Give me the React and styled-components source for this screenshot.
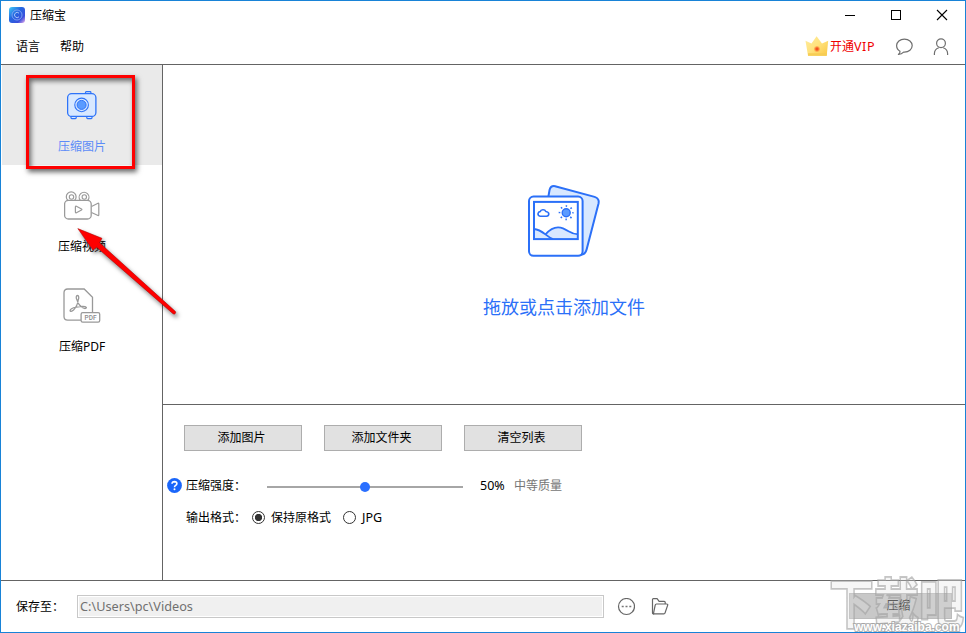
import { useState } from 'react';
import styled, { createGlobalStyle, css } from 'styled-components';

const GlobalStyle = createGlobalStyle`
	* {
		box-sizing: border-box;
	}

	body {
		margin: 0;
		background-color: white;
		font-family: 'Noto Sans', 'Noto Sans CJK SC', sans-serif;
		font-size: 12px;
		line-height: 16px;
		color: black;
	}

	button {
		font: inherit;
		color: inherit;
		padding: 0;
	}
`;

const LogoIcon = () => (
	<svg width='16' height='16' viewBox='0 0 16 16'>
		<defs>
			<linearGradient id='logo' x1='0' y1='0' x2='1' y2='1'>
				<stop offset='0' stopColor='#42d0f8' />
				<stop offset='0.4' stopColor='#2468e0' />
				<stop offset='0.75' stopColor='#3a50dc' />
				<stop offset='1' stopColor='#f0b0ec' />
			</linearGradient>
		</defs>
		<rect width='16' height='16' rx='3' fill='url(#logo)' />
		<circle cx='8' cy='8' r='5' fill='none' stroke='#7fa6f4' strokeWidth='0.9' />
		<path
			d='M10 6.2A2.6 2.6 0 1 0 10 9.8'
			fill='none'
			stroke='#a9c6fa'
			strokeWidth='1'
		/>
	</svg>
);

const CrownIcon = () => (
	<svg width='24' height='20' viewBox='0 0 24 20'>
		<defs>
			<linearGradient id='crown' x1='0' y1='0' x2='1' y2='1'>
				<stop offset='0' stopColor='#ffec9e' />
				<stop offset='0.5' stopColor='#ffe27c' />
				<stop offset='1' stopColor='#fbc743' />
			</linearGradient>
			<radialGradient id='gem'>
				<stop offset='0.35' stopColor='#f4511e' />
				<stop offset='1' stopColor='#ffb052' stopOpacity='0.5' />
			</radialGradient>
		</defs>
		<path
			d='M.5 4.8 6.5 7.4 11.6.2 17 7.4 23.2 4.8 21.7 19.8H3Z'
			fill='url(#crown)'
		/>
		<path d='M3 17.2h19l-.3 2.6H3Z' fill='#f6cd55' />
		<circle cx='12' cy='13' r='3.1' fill='url(#gem)' />
	</svg>
);

const ChatIcon = () => (
	<svg width='18' height='18' viewBox='0 0 18 18' fill='none' stroke='#6e6e6e'>
		<path
			d='M5 13.2C2.9 12.1 1.6 10 1.6 7.6 1.6 3.9 5 1.1 9.4 1.1s7.8 2.8 7.8 6.5-3.4 6.6-7.8 6.6H8.6C7.5 15.4 5.9 16.3 3.4 16.5c1.3-1 1.8-2 1.6-3.3Z'
			strokeWidth='1.2'
			strokeLinejoin='round'
		/>
	</svg>
);

const UserIcon = () => (
	<svg width='16' height='18' viewBox='0 0 16 18' fill='none' stroke='#6e6e6e'>
		<circle cx='8' cy='5.3' r='4.4' strokeWidth='1.2' />
		<path
			d='M1.4 17v-1.4c0-3 1.8-5 4.4-5.9M14.6 17v-1.4c0-3-1.8-5-4.4-5.9'
			strokeWidth='1.2'
		/>
	</svg>
);

const ImageIcon = () => (
	<svg width='30' height='30' viewBox='0 0 30 30' fill='#d8e8ff' stroke='#2e73f8'>
		<path
			d='M18.5 3V1.5q0-.8.8-.8h3.8q.8 0 .8.8V3M4 25v1.8q0 .8.8.8h3.6q.8 0 .8-.8V25M19.8 25v1.8q0 .8.8.8h3.6q.8 0 .8-.8V25'
			strokeWidth='1.2'
		/>
		<rect x='.6' y='2.7' width='28.3' height='22.7' rx='4' strokeWidth='1.3' />
		<circle cx='14.6' cy='13.9' r='6.8' strokeWidth='1.1' />
		<circle cx='14.6' cy='13.9' r='4.5' fill='#5b9bff' />
	</svg>
);

const VideoIcon = () => (
	<svg width='36' height='30' viewBox='0 0 36 30' fill='none' stroke='#9a9a9a'>
		<path
			d='M3.9 9.4A4.9 4.9 0 1 1 10.5 9.4M16.3 9.4A4.9 4.9 0 1 1 23.8 9.4'
			strokeWidth='1.2'
		/>
		<circle cx='7.5' cy='6' r='2.2' strokeWidth='1.1' />
		<circle cx='20.3' cy='6' r='2.2' strokeWidth='1.1' />
		<rect x='.6' y='9.3' width='26.6' height='18.7' rx='3.8' strokeWidth='1.3' />
		<path
			d='M27.5 15.5 34 12.2q.8-.3.8.5V24q0 .8-.8.5L27.5 21.5'
			strokeWidth='1.2'
		/>
		<path
			d='M11.4 15.9q0-1.1 1-.6l5.1 2.7q.8.5 0 1l-5.1 2.7q-1 .5-1-.6Z'
			strokeWidth='1.2'
		/>
	</svg>
);

const PdfIcon = () => (
	<svg width='38' height='36' viewBox='0 0 38 36' fill='none' stroke='#999'>
		<path
			d='M18 32.1H4.7Q1 32.1 1 28.4V4.7Q1 1 4.7 1H21.2L29.5 9.2V24'
			strokeWidth='1.3'
		/>
		<path
			d='M13.9 11.7C12.7 9.6 13.2 7.5 14.5 7.5s1.7 2.1.7 4.5c-.4 3.5-2 7.2-4.7 10.1-1.6 1.4-3.5 1.7-3.4.5.1-1.4 2.6-2.7 6.2-3.4 3.6-.8 8.9-1.3 10 .1.4 1-1.3 1.8-3.5.5-2.8-1.6-5-4.6-5.9-8.1Z'
			strokeWidth='1.3'
		/>
		<rect
			x='18.1'
			y='24.7'
			width='18.6'
			height='9.4'
			rx='1.6'
			fill='white'
			strokeWidth='1.3'
		/>
		<text
			x='27.5'
			y='32'
			textAnchor='middle'
			fontFamily='Roboto, sans-serif'
			fontSize='6.5'
			fontWeight='500'
			fill='#8a8a8a'
			stroke='none'
		>
			PDF
		</text>
	</svg>
);

const PhotosIcon = () => (
	<svg
		width='74'
		height='74'
		viewBox='0 0 74 74'
		fill='#d8e8ff'
		stroke='#2b70f8'
		strokeWidth='2'
		strokeLinejoin='round'
	>
		<path d='M21.2 13.6 22.6 5.8Q23.8 1.4 28.1 2.2L67.6 12.9Q72.6 14.6 71.6 19.3L59.6 65.5Q58.4 70.6 53.5 70.9' />
		<rect x='2' y='12.6' width='53.6' height='59.2' rx='4.5' fill='white' />
		<path
			d='M7 45.2C13 45.5 16.2 47.8 19 50.8 24.2 44.5 30.5 42.6 36 44.8 42.5 47.5 44.8 51 51 50.4V55H7Z'
			stroke='none'
		/>
		<path
			d='M7 45C15 45.3 19.5 52.8 26 55.2M18.5 50.4C24 44.1 30.5 42.2 36 44.4 42.5 47.1 44.8 50.6 51 50'
			fill='none'
			strokeWidth='1.8'
		/>
		<rect x='7' y='17.9' width='43.8' height='37.2' fill='none' strokeLinejoin='miter' />
		<path
			d='M13.2 32.3Q10.8 31.7 11 29.6 11.3 27.7 13.3 27.5 13.7 25.9 15.8 25.7 18 25.5 18.8 27.5 21.8 28 21.8 30 21.7 32.1 19.4 32.3Z'
			fill='white'
			strokeWidth='1.6'
		/>
		<circle cx='39.2' cy='28.7' r='4' fill='#5b9bff' strokeWidth='1.4' />
		<circle
			cx='39.2'
			cy='28.7'
			r='6.7'
			fill='none'
			strokeWidth='1.7'
			strokeDasharray='1.5 3.762'
			strokeDashoffset='.75'
		/>
	</svg>
);

const HelpIcon = () => (
	<svg width='15' height='15' viewBox='0 0 15 15'>
		<circle cx='7.5' cy='7.5' r='7.4' fill='#1a66fa' />
		<path
			d='M5 5.8Q5.1 3.6 7.5 3.6 9.8 3.7 9.9 5.6 9.9 6.7 8.7 7.4 7.5 8 7.5 9.2'
			fill='none'
			stroke='white'
			strokeWidth='1.6'
		/>
		<circle cx='7.5' cy='11.2' r='1' fill='white' />
	</svg>
);

const MoreIcon = () => (
	<svg width='18' height='18' viewBox='0 0 18 18'>
		<circle cx='9.5' cy='8.5' r='8' fill='none' stroke='#666' strokeWidth='1.2' />
		<path d='M4.7 7.7h2v1.6h-2zM8.5 7.7h2v1.6h-2zM12.3 7.7h2v1.6h-2z' fill='#777' />
	</svg>
);

const FolderIcon = () => (
	<svg
		width='18'
		height='18'
		viewBox='0 0 18 18'
		fill='none'
		stroke='#666'
		strokeWidth='1.2'
		strokeLinejoin='round'
	>
		<path d='M3.2 15.8H2.4Q1.5 15.8 1.5 14.8V1.5Q1.5.6 2.4.6H6.1L8.1 3.3H13.2Q14.2 3.3 14.2 4.3V5.9' />
		<path d='M2.4 15.8 4.2 7.1Q4.4 6 5.5 6H15.8Q17 6 16.7 7.1L14.1 14.8Q13.8 15.8 12.8 15.8Z' />
	</svg>
);

const tools = [
	{ id: 'image', label: '压缩图片', icon: <ImageIcon /> },
	{ id: 'video', label: '压缩视频', icon: <VideoIcon /> },
	{ id: 'pdf', label: '压缩PDF', icon: <PdfIcon /> },
];

export default () => {
	const [tool, setTool] = useState('image');
	const [format, setFormat] = useState('keep');
	const strength = 50;

	return (
		<Window>
			<GlobalStyle />
			<TitleBar>
				<LogoIcon />
				<Title>压缩宝</Title>
				<WindowControls>
					<svg width='12' height='12' stroke='black'>
						<path d='M1 6.5h10' />
					</svg>
					<svg width='12' height='12' fill='none' stroke='black'>
						<rect x='1.5' y='1.5' width='9' height='9' />
					</svg>
					<svg width='12' height='12' stroke='black'>
						<path d='M1 1 11 11M11 1 1 11' strokeWidth='1.1' />
					</svg>
				</WindowControls>
			</TitleBar>
			<MenuBar>
				<MenuItem>语言</MenuItem>
				<MenuItem>帮助</MenuItem>
				<Account>
					<CrownIcon />
					<VipLink>
						开通<span>VIP</span>
					</VipLink>
					<ChatIcon />
					<UserIcon />
				</Account>
			</MenuBar>
			<Body>
				<Sidebar>
					{tools.map(({ id, label, icon }) => (
						<SidebarItem
							key={id}
							$active={tool === id}
							onClick={() => setTool(id)}
						>
							<IconSlot>{icon}</IconSlot>
							{label}
						</SidebarItem>
					))}
					<Highlight />
					<Arrow width='130' height='110' viewBox='0 0 130 110'>
						<path
							d='M7.8 9.6 32 19.3 29.6 23.8 105 92.1A1.5 1.5 0 0 1 103 94.7L26.6 28.2 23 31.3Z'
							fill='#fe0000'
							stroke='#a40000'
							strokeWidth='.5'
						/>
					</Arrow>
				</Sidebar>
				<Main>
					<DropZone>
						<PhotosIcon />
						<p>拖放或点击添加文件</p>
					</DropZone>
					<Settings>
						<Buttons>
							<Button>添加图片</Button>
							<Button>添加文件夹</Button>
							<Button>清空列表</Button>
						</Buttons>
						<StrengthRow>
							<HelpIcon />
							<Label>压缩强度：</Label>
							<Track>
								<Thumb style={{ left: `${strength}%` }} />
							</Track>
							<Percent>{strength}%</Percent>
							<Quality>中等质量</Quality>
						</StrengthRow>
						<FormatRow>
							<Label>输出格式：</Label>
							<Option onClick={() => setFormat('keep')}>
								<Radio $checked={format === 'keep'} />
								<span>保持原格式</span>
							</Option>
							<Option onClick={() => setFormat('jpg')}>
								<Radio $checked={format === 'jpg'} />
								<Latin>JPG</Latin>
							</Option>
						</FormatRow>
					</Settings>
				</Main>
			</Body>
			<Footer>
				<SaveLabel>保存至：</SaveLabel>
				<PathBox>C:\Users\pc\Videos</PathBox>
				<MoreIcon />
				<FolderIcon />
				<CompressButton>压缩</CompressButton>
			</Footer>
			<Watermark>
				<strong>下载吧</strong>
				<span>www.xiazaiba.com</span>
			</Watermark>
		</Window>
	);
};

const Window = styled.div`
	position: relative;
	width: 966px;
	height: 633px;
	border: 1px solid #1883d7;
	background-color: white;
	display: flex;
	flex-direction: column;
	overflow: hidden;
	white-space: nowrap;

	svg {
		display: block;
		flex: none;
	}
`;

const TitleBar = styled.header`
	height: 28px;
	display: flex;
	align-items: center;
	padding: 0 17px 0 8px;
`;

const Title = styled.h1`
	margin: 2px 0 0 5px;
	font-size: 12px;
	font-weight: 400;
`;

const WindowControls = styled.div`
	margin-left: auto;
	display: flex;
	gap: 34px;
`;

const MenuBar = styled.nav`
	height: 36px;
	border-bottom: 1px solid #646464;
	display: flex;
	align-items: center;
	gap: 20px;
	padding: 0 16px 0 15px;
`;

const MenuItem = styled.span`
	margin-top: 1px;
`;

const Account = styled.div`
	margin-left: auto;
	display: flex;
	align-items: center;

	svg:first-child {
		margin-bottom: 2px;
	}

	svg + svg {
		margin-left: 20px;
	}
`;

const VipLink = styled.span`
	width: 46px;
	margin: 0 19px 0 1px;
	color: #f00000;

	span {
		font-size: 12.5px;
		letter-spacing: 0.6px;
	}
`;

const Body = styled.div`
	flex: 1;
	display: flex;
	min-height: 0;
`;

const Sidebar = styled.aside`
	position: relative;
	width: 162px;
	border-right: 1px solid #646464;
	padding-left: 1px;
`;

const SidebarItem = styled.div`
	height: 100px;
	padding-top: 21px;
	display: flex;
	flex-direction: column;
	align-items: center;
	gap: 13px;

	${({ $active }) =>
		$active &&
		css`
			background-color: #eaeaea;
			color: #5c8cf8;
		`}
`;

const IconSlot = styled.div`
	height: 40px;
	margin-right: 1px;
	display: flex;
	align-items: center;
`;

const Highlight = styled.div`
	position: absolute;
	left: 25px;
	top: 10px;
	width: 109px;
	height: 94px;
	border: 3px solid #fe0000;
	box-shadow: 2px 3px 5px rgba(0, 0, 0, 0.6),
		inset 2px 3px 5px rgba(0, 0, 0, 0.55);
`;

const Arrow = styled.svg`
	position: absolute;
	z-index: 2;
	left: 69px;
	top: 154px;
	filter: drop-shadow(2px 3px 2px rgba(0, 0, 0, 0.5));
`;

const Main = styled.main`
	flex: 1;
	display: flex;
	flex-direction: column;
`;

const DropZone = styled.section`
	height: 340px;
	border-bottom: 1px solid #646464;
	padding-top: 119px;
	display: flex;
	flex-direction: column;
	align-items: center;

	p {
		margin: 37px 0 0;
		font-size: 18px;
		line-height: 24px;
		color: #2b70f8;
	}
`;

const Settings = styled.section`
	padding: 20px 0 0 4px;
`;

const Buttons = styled.div`
	display: flex;
	gap: 22px;
	padding-left: 17px;
`;

const Button = styled.button`
	width: 118px;
	height: 26px;
	border: 1px solid #adadad;
	background-color: #e1e1e1;
	line-height: 20px;
	padding-right: 3px;
`;

const StrengthRow = styled.div`
	display: flex;
	align-items: center;
	height: 16px;
	margin-top: 26px;
`;

const FormatRow = styled.div`
	display: flex;
	align-items: center;
	height: 16px;
	margin: 16px 0 0 15px;
`;

const Label = styled.span`
	width: 60px;
	margin: 1px 0 0 4px;
`;

const Track = styled.div`
	position: relative;
	width: 196px;
	height: 2px;
	margin: 3px 17px 0 21px;
	background-color: #a6a6a6;
`;

const Thumb = styled.i`
	position: absolute;
	top: -4px;
	width: 10px;
	height: 10px;
	margin-left: -5px;
	border-radius: 50%;
	background-color: #2a6fff;
`;

const Latin = styled.span`
	font-size: 12.5px;
`;

const Percent = styled(Latin)`
	width: 34px;
	margin-top: 2px;
`;

const Quality = styled.span`
	margin-top: 1px;
	color: #767676;
`;

const Option = styled.div`
	display: flex;
	align-items: center;
	gap: 6px;
	margin: 0 6px;

	span {
		margin-top: 1px;
	}
`;

const Radio = styled.i`
	width: 13px;
	height: 13px;
	border: 1px solid #333;
	border-radius: 50%;
	background: ${({ $checked }) =>
		$checked ? 'radial-gradient(circle, #333 3.3px, white 4px)' : 'white'};
`;

const Footer = styled.footer`
	height: 52px;
	border-top: 1px solid #646464;
	display: flex;
	align-items: center;
	padding: 0 13px 0 15px;

	svg + svg {
		margin-left: 16px;
	}
`;

const SaveLabel = styled.span`
	width: 61px;
	margin-top: 1px;
`;

const PathBox = styled.div`
	width: 527px;
	height: 23px;
	margin-right: 13px;
	padding-left: 2px;
	border: 1px solid #c8c8c8;
	box-shadow: inset 0 0 0 1px white;
	background-color: #f0f0f0;
	color: #707070;
	font-size: 12.7px;
	line-height: 20px;
`;

const CompressButton = styled.button`
	width: 103px;
	height: 26px;
	margin: 0 0 2px auto;
	padding: 1px 4px 0 0;
	border: 1px solid #bcbcbc;
	background-color: #c8c8c8;
	color: #222;
`;

const Watermark = styled.div`
	position: absolute;
	right: 0;
	bottom: -1px;
	width: 136px;
	height: 58px;
	pointer-events: none;

	strong,
	span {
		position: absolute;
		color: rgba(225, 225, 225, 0.3);
		-webkit-text-stroke: 1.5px rgba(160, 160, 160, 0.6);
	}

	strong {
		left: 0;
		top: 2px;
		font-size: 45px;
		font-weight: 900;
		line-height: 54px;
		transform: scaleY(1.2);
	}

	span {
		left: 25px;
		bottom: -2px;
		color: white;
		font: 700 12px/16px 'Liberation Sans', sans-serif;
		-webkit-text-stroke: 2px rgba(160, 160, 160, 0.8);
		paint-order: stroke fill;
	}
`;
